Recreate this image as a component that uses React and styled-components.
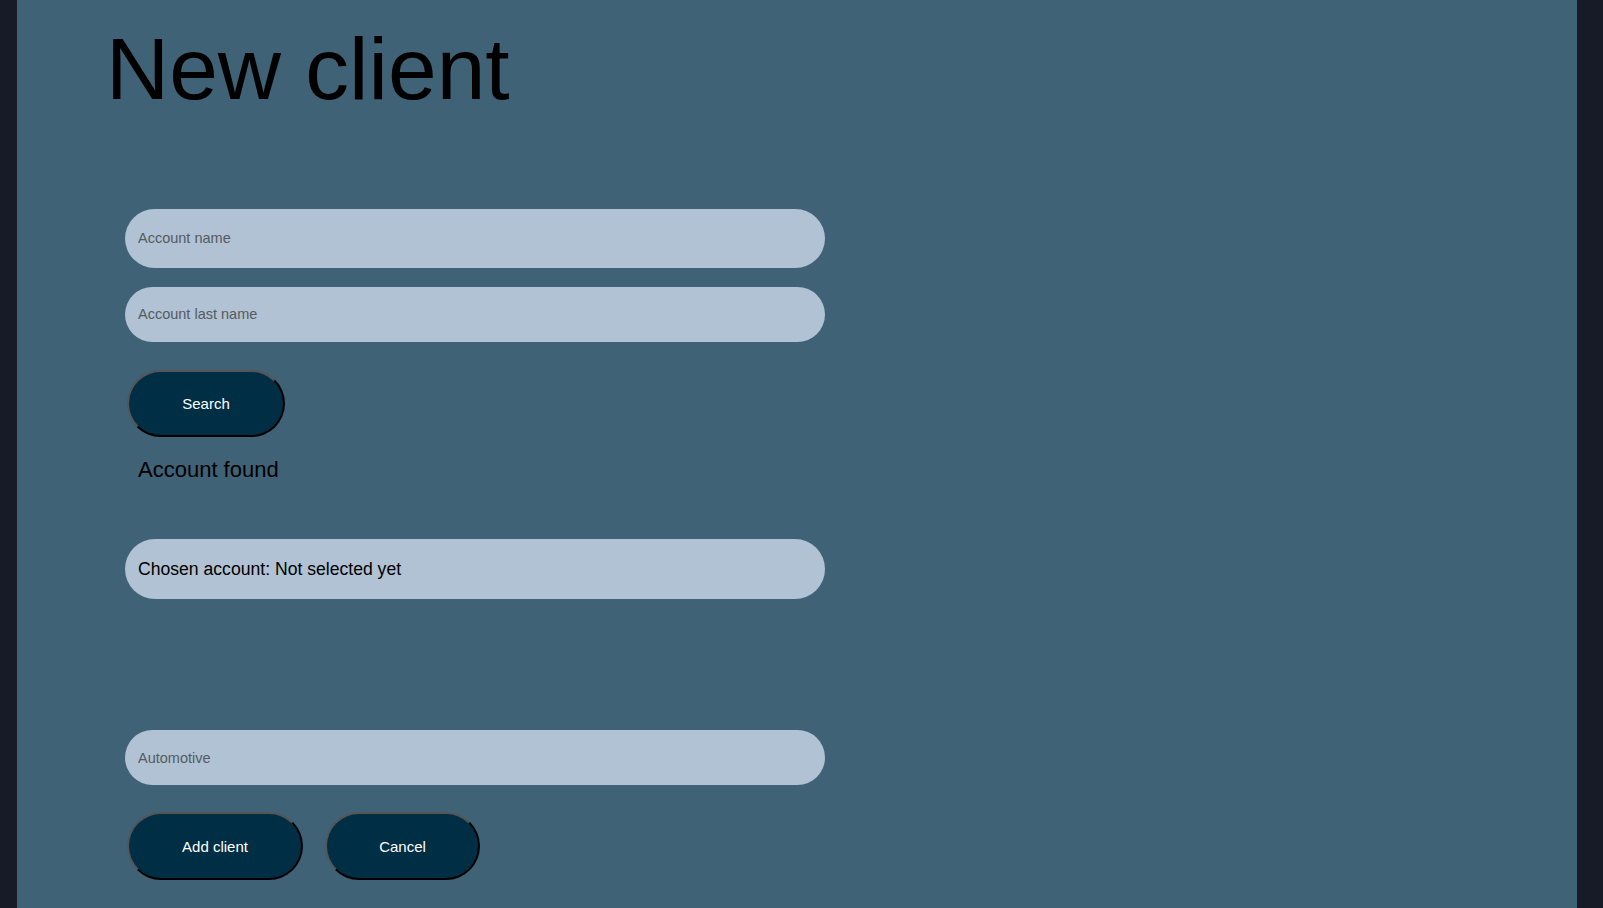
import styled, { createGlobalStyle } from 'styled-components';

const GlobalStyle = createGlobalStyle`
    html, body {
        margin: 0;
        padding: 0;
        background-color: #171a27;
        font-family: "Liberation Sans", Arial, sans-serif;
    }
`;

const Page = styled.div`
    display: flex;
    min-height: 908px;
    padding-left: 17px;
`;

const Panel = styled.main`
    width: 1560px;
    background-color: #406277;
    display: flex;
    flex-direction: column;
`;

const Title = styled.h1`
    margin: 21px 0 0 89px;
    font-size: 87.5px;
    font-weight: normal;
    line-height: 1.117;
    color: #000;
`;

const Form = styled.form`
    display: flex;
    flex-direction: column;
    align-items: flex-start;
    padding-left: 108px;
    margin-top: 90px;
`;

const Field = styled.input`
    box-sizing: border-box;
    width: 700px;
    height: ${props => props.height}px;
    margin-bottom: ${props => props.gap || 0}px;
    padding: 0 13px;
    border: none;
    border-radius: 30px;
    background-color: #b0c2d3;
    font-family: inherit;
    font-size: 14.5px;
    color: #222;
    outline: none;

    &::placeholder {
        color: #555b60;
    }
`;

const Chosen = styled.div`
    box-sizing: border-box;
    width: 700px;
    height: 60px;
    display: flex;
    align-items: center;
    padding: 0 13px;
    border-radius: 30px;
    background-color: #b0c2d3;
    font-size: 17.6px;
    color: #000;
    margin-bottom: 131px;
`;

const Button = styled.button`
    box-sizing: border-box;
    width: ${props => props.width}px;
    height: ${props => props.tall ? 68 : 67}px;
    border: 2px outset #555;
    border-right-color: #050505;
    border-bottom-color: #050505;
    border-radius: 34px;
    background-color: #002e45;
    color: #fff;
    font-family: inherit;
    font-size: 15px;
    cursor: pointer;
`;

const SearchButton = styled(Button)`
    margin: 28px 0 0 2px;
`;

const Found = styled.p`
    margin: 20px 0 57px 13px;
    font-size: 22px;
    line-height: 1.15;
    color: #000;
`;

const Actions = styled.div`
    display: flex;
    gap: 22px;
    margin: 27px 0 0 2px;
`;

const App = () => {
    return (
        <>
            <GlobalStyle />
            <Page>
                <Panel>
                    <Title>New client</Title>
                    <Form onSubmit={e => e.preventDefault()}>
                        <Field height={59} gap={19} placeholder="Account name" />
                        <Field height={55} placeholder="Account last name" />
                        <SearchButton type="button" width={158}>Search</SearchButton>
                        <Found>Account found</Found>
                        <Chosen>Chosen account: Not selected yet</Chosen>
                        <Field height={55} placeholder="Automotive" />
                        <Actions>
                            <Button type="button" width={176} tall>Add client</Button>
                            <Button type="button" width={155} tall>Cancel</Button>
                        </Actions>
                    </Form>
                </Panel>
            </Page>
        </>
    );
};

export default App;
